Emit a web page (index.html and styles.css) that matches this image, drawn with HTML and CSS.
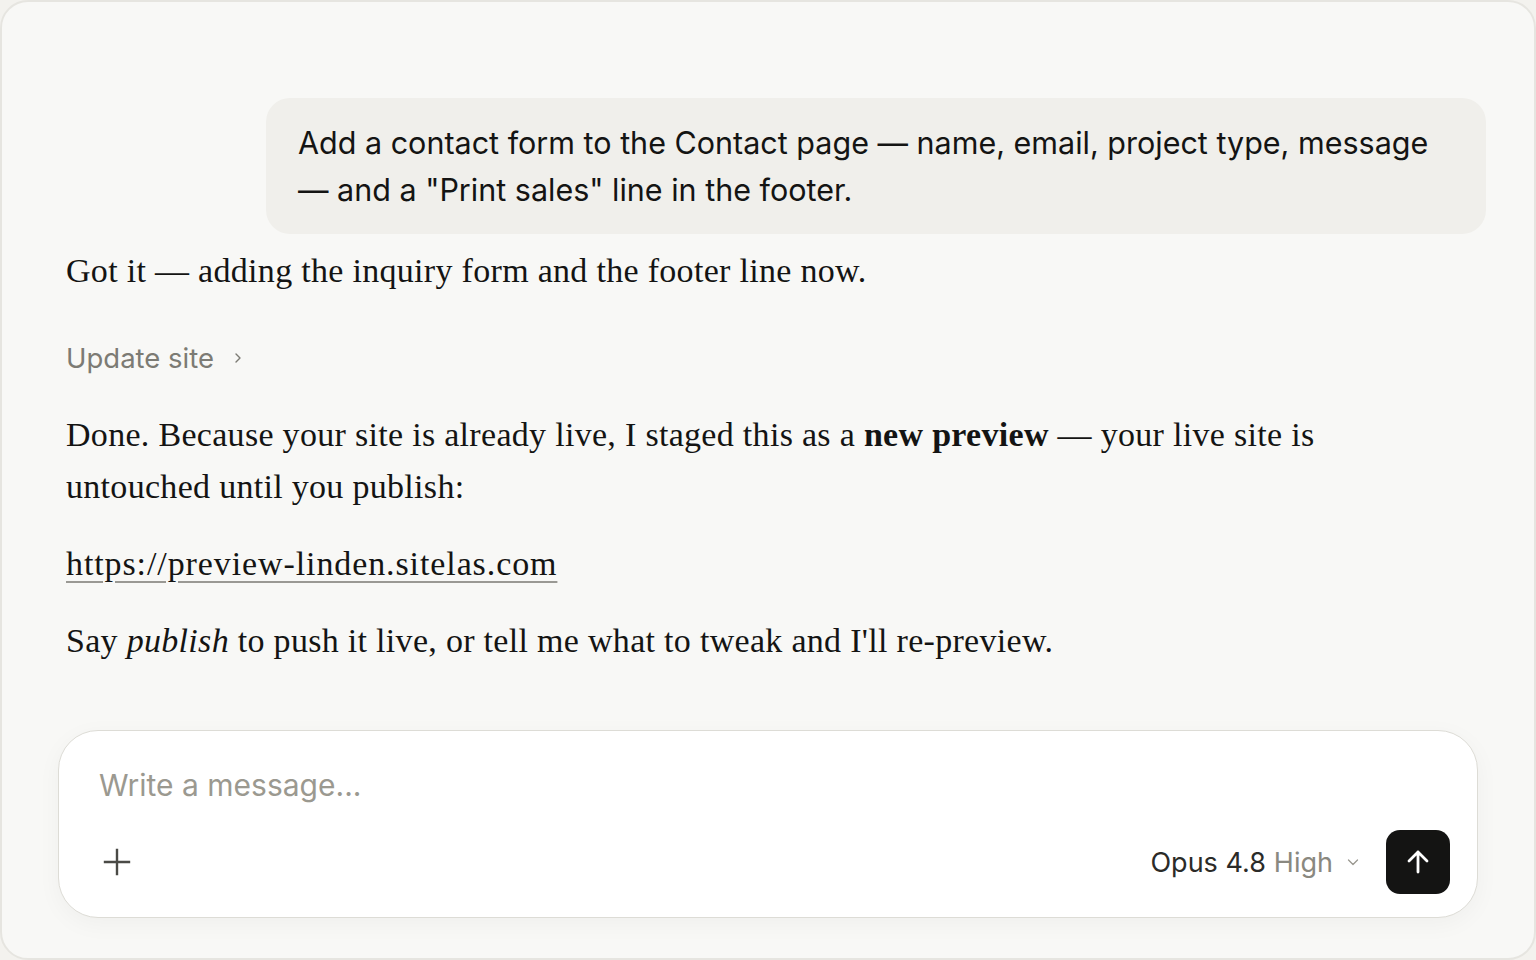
FILE: index.html
```html
<!DOCTYPE html>
<html>

<head>
    <title>Chat</title>
    <meta charset="UTF-8">
    <meta name="viewport" content="width=device-width, initial-scale=1.0">
    <link rel="stylesheet" href="styles.css">
</head>

<body>
    <div class="frame">
        <div class="thread">
            <div class="user-row">
                <div class="bubble">Add a contact form to the Contact page — name, email, project type, message — and a "Print sales" line in the footer.</div>
            </div>

            <p class="reply first">Got it — adding the inquiry form and the footer line now.</p>

            <div class="tool">
                <span>Update site</span>
                <svg width="14" height="14" viewBox="0 0 14 14" fill="none" stroke="currentColor" stroke-width="1.4" stroke-linecap="round" stroke-linejoin="round">
                    <path d="M5 3l4 4-4 4" />
                </svg>
            </div>

            <p class="reply">Done. Because your site is already live, I staged this as a <b>new preview</b> — your live site is untouched until you publish:</p>
            <p class="reply"><a href="#">https://preview-linden.sitelas.com</a></p>
            <p class="reply">Say <i>publish</i> to push it live, or tell me what to tweak and I'll re-preview.</p>
        </div>

        <div class="composer">
            <div class="placeholder">Write a message...</div>
            <div class="toolbar">
                <button class="plus" aria-label="Attach">
                    <svg width="28" height="28" viewBox="0 0 28 28" fill="none" stroke="currentColor" stroke-width="2.4" stroke-linecap="square">
                        <path d="M14 2v24M2 14h24" />
                    </svg>
                </button>
                <div class="model">
                    <span class="name">Opus 4.8</span>
                    <span class="effort">High</span>
                    <svg width="14" height="14" viewBox="0 0 14 14" fill="none" stroke="currentColor" stroke-width="1.3" stroke-linecap="round" stroke-linejoin="round">
                        <path d="M2.5 5l4.5 4.5L11.5 5" />
                    </svg>
                </div>
                <button class="send" aria-label="Send">
                    <svg width="28" height="28" viewBox="0 0 28 28" fill="none" stroke="currentColor" stroke-width="2.8" stroke-linecap="round" stroke-linejoin="round">
                        <path d="M14 24V4M5 13l9-9 9 9" />
                    </svg>
                </button>
            </div>
        </div>
    </div>
</body>

</html>
```

FILE: styles.css
```css
:root {
    --page: #f8f8f6;
    --line: #e6e5e0;
    --text: #141413;
    --muted: #7c7b74;
    --bubble: #f0efeb;
}

html,
body {
    margin: 0;
    height: 100%;
    background: #f3f2ee;
}

.frame {
    box-sizing: border-box;
    height: 960px;
    display: flex;
    flex-direction: column;
    background: var(--page);
    border: 2px solid var(--line);
    border-radius: 28px;
    padding: 96px 48px 40px 64px;
}

.thread {
    flex: 1;
}

.user-row {
    display: flex;
    justify-content: flex-end;
    margin-bottom: 11px;
}

.bubble {
    width: 1156px;
    background: var(--bubble);
    border-radius: 24px;
    padding: 21px 32px;
    font-family: Inter, "Noto Sans", sans-serif;
    font-size: 30.5px;
    line-height: 47px;
    color: var(--text);
}

.reply {
    max-width: 1380px;
    margin: 0 0 25px;
    font-family: "Liberation Serif", "Times New Roman", serif;
    font-size: 34px;
    letter-spacing: 0.3px;
    line-height: 52px;
    color: var(--text);
}

.reply.first {
    margin-bottom: 0;
}

.reply b {
    font-weight: 700;
}

.reply a {
    color: var(--text);
    letter-spacing: 0.9px;
    text-decoration: underline;
    text-decoration-color: #9a9994;
    text-decoration-thickness: 2px;
    text-underline-offset: 6px;
}

.tool {
    display: flex;
    align-items: center;
    gap: 17px;
    height: 40px;
    margin: 41px 0 31px;
    font-family: Inter, "Noto Sans", sans-serif;
    font-size: 27.5px;
    color: var(--muted);
}

.composer {
    margin-left: -8px;
    margin-right: 8px;
    background: #fff;
    border: 1px solid #dddcd6;
    border-radius: 40px;
    padding: 34px 27px 23px 40px;
    box-shadow: 0 6px 24px rgba(0, 0, 0, 0.04);
    font-family: Inter, "Noto Sans", sans-serif;
}

.placeholder {
    font-size: 30px;
    line-height: 40px;
    color: #9b9990;
    margin-bottom: 25px;
}

.toolbar {
    display: flex;
    align-items: center;
    height: 64px;
}

.plus {
    border: none;
    background: none;
    padding: 0;
    margin-left: 4px;
    width: 28px;
    height: 28px;
    color: #4a4a46;
    cursor: pointer;
}

.model {
    margin-left: auto;
    display: flex;
    align-items: center;
    font-size: 27px;
    margin-right: 26px;
}

.model .name {
    color: #2b2b28;
}

.model .effort {
    color: #8a8880;
    margin-left: 8px;
}

.model svg {
    color: #9a9890;
    margin-left: 13px;
}

.send {
    width: 64px;
    height: 64px;
    border: none;
    border-radius: 14px;
    background: var(--text);
    color: #fff;
    display: flex;
    align-items: center;
    justify-content: center;
    cursor: pointer;
}
```
